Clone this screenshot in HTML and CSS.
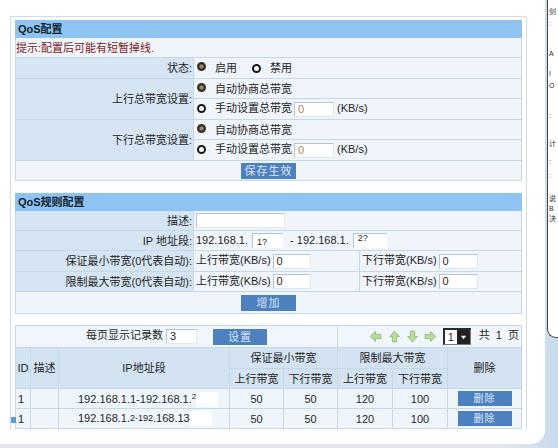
FILE: index.html
```html
<!DOCTYPE html>
<html lang="zh-CN">
<head>
<meta charset="utf-8">
<title>QoS配置</title>
<link rel="stylesheet" href="styles.css">
</head>
<body>
<div class="screen">
  <div class="main">
    <div class="frame">
      <table class="form s1">
        <colgroup><col class="c-lab"><col></colgroup>
        <tr class="h17"><td class="head" colspan="2">QoS配置</td></tr>
        <tr class="h20"><td class="tip" colspan="2">提示:配置后可能有短暂掉线.</td></tr>
        <tr class="h21"><td class="lab">状态:</td><td class="val"><span class="radio on"></span><span class="rt">启用</span><span class="radio off sp"></span><span class="rt">禁用</span></td></tr>
        <tr class="h20"><td class="lab" rowspan="2">上行总带宽设置:</td><td class="val"><span class="radio on"></span><span class="rt">自动协商总带宽</span></td></tr>
        <tr class="h21"><td class="val"><span class="radio off"></span><span class="rt">手动设置总带宽</span><span class="box b40 tan">0</span><span class="unit">(KB/s)</span></td></tr>
        <tr class="h20"><td class="lab" rowspan="2">下行总带宽设置:</td><td class="val"><span class="radio on"></span><span class="rt">自动协商总带宽</span></td></tr>
        <tr class="h21"><td class="val"><span class="radio off"></span><span class="rt">手动设置总带宽</span><span class="box b40 tan">0</span><span class="unit">(KB/s)</span></td></tr>
        <tr class="h20"><td class="btnrow" colspan="2"><span class="btn">保存生效</span></td></tr>
      </table>

      <table class="form s2">
        <colgroup><col class="c-lab"><col class="c-mid"><col></colgroup>
        <tr class="h17"><td class="head" colspan="3">QoS规则配置</td></tr>
        <tr class="h20"><td class="lab">描述:</td><td class="val" colspan="2"><span class="box b89"></span></td></tr>
        <tr class="h20"><td class="lab">IP 地址段:</td><td class="val" colspan="2">192.168.1.<span class="box b31 ipa"><span class="tiny lo">1?</span></span> - 192.168.1.<span class="box b34 ipb"><span class="tiny hi">2?</span></span></td></tr>
        <tr class="h21"><td class="lab">保证最小带宽(0代表自动):</td><td class="val">上行带宽(KB/s)<span class="box b38">0</span></td><td class="val">下行带宽(KB/s)<span class="box b39">0</span></td></tr>
        <tr class="h20"><td class="lab">限制最大带宽(0代表自动):</td><td class="val">上行带宽(KB/s)<span class="box b38">0</span></td><td class="val">下行带宽(KB/s)<span class="box b39">0</span></td></tr>
        <tr class="h22"><td class="btnrow" colspan="3"><span class="btn">增加</span></td></tr>
      </table>

      <table class="list">
        <colgroup>
          <col class="w15"><col class="w28"><col class="w171"><col class="w54"><col class="w54"><col class="w55"><col class="w55"><col>
        </colgroup>
        <tr class="h22 pagerow">
          <td colspan="5" class="per">每页显示记录数<span class="box b31 pg">3</span><span class="btn small">设置</span></td>
          <td colspan="3" class="pager">
            <svg class="ico" viewBox="0 0 12 12" width="13" height="13"><path d="M1 6 L6 1.5 V4 H11 V8 H6 V10.5 Z" fill="#b9dc9c" stroke="#8fbe6e" stroke-width="0.8"/></svg>
            <svg class="ico" viewBox="0 0 12 12" width="13" height="13"><path d="M6 1 L10.5 6 H8 V11 H4 V6 H1.5 Z" fill="#b9dc9c" stroke="#8fbe6e" stroke-width="0.8"/></svg>
            <svg class="ico" viewBox="0 0 12 12" width="13" height="13"><path d="M6 11 L10.5 6 H8 V1 H4 V6 H1.5 Z" fill="#b9dc9c" stroke="#8fbe6e" stroke-width="0.8"/></svg>
            <svg class="ico" viewBox="0 0 12 12" width="13" height="13"><path d="M11 6 L6 1.5 V4 H1 V8 H6 V10.5 Z" fill="#b9dc9c" stroke="#8fbe6e" stroke-width="0.8"/></svg>
            <span class="sel"><span class="selv">1</span><span class="seld"><svg viewBox="0 0 10 10" width="9" height="9"><path d="M2 3 H8 L5 7 Z" fill="#fff"/></svg></span></span>
            <span class="pgtxt">共 1 页</span>
          </td>
        </tr>
        <tr class="h21 th">
          <td rowspan="2">ID</td><td rowspan="2">描述</td><td rowspan="2">IP地址段</td>
          <td colspan="2">保证最小带宽</td><td colspan="2">限制最大带宽</td><td rowspan="2">删除</td>
        </tr>
        <tr class="h20 th">
          <td>上行带宽</td><td>下行带宽</td><td>上行带宽</td><td>下行带宽</td>
        </tr>
        <tr class="h20 tr">
          <td class="id">1</td><td></td><td class="ip">192.168.1.1-192.168.1.<span class="sup">2</span><span class="mask"></span></td>
          <td>50</td><td>50</td><td>120</td><td>100</td><td><span class="btn del">删除</span></td>
        </tr>
        <tr class="h20 tr">
          <td class="id"><span class="mark"></span>1</td><td></td><td class="ip">192.168.1.<span class="sm">2-192</span>.168.13<span class="mask"></span></td>
          <td>50</td><td>50</td><td>120</td><td>100</td><td><span class="btn del">删除</span></td>
        </tr>
      </table>
    </div>
  </div>
  <div class="side">
    <p class="f1">剑</p>
    <p class="f2">:</p>
    <p class="f3">A</p>
    <p class="f4">I</p>
    <p class="f5">O</p>
    <p class="f6">:</p>
    <p class="f7">计</p>
    <p class="f8">:</p>
    <p class="f9">:</p>
    <p class="f10">说</p>
    <p class="f11">B</p>
    <p class="f12">决</p>
  </div>
</div>
</body>
</html>
```
FILE: styles.css
```css
html, body {
  margin: 0;
  padding: 0;
}
body {
  width: 558px;
  height: 448px;
  overflow: hidden;
  background: linear-gradient(to right, #e3e7eb 0%, #e3e7eb 90%, #c8dbee 100%);
  font-family: "Liberation Sans", "Noto Sans CJK SC", sans-serif;
  font-size: 11px;
  color: #1f1f1f;
}
.screen {
  display: flex;
  align-items: flex-start;
  height: 448px;
}
.main {
  width: 545px;
  height: 444px;
  background: #fff;
  border-bottom-right-radius: 14px;
  padding: 16px 0 0 10px;
  box-sizing: border-box;
  flex: none;
}
.frame {
  width: 517px;
  height: 414px;
  border: 1px solid #cfdce8;
  border-bottom: none;
  box-sizing: border-box;
  padding: 3px 0 0 4px;
}
table {
  border-collapse: collapse;
  table-layout: fixed;
  width: 507px;
}
td {
  padding: 0;
  border: 1px solid #c6d7e7;
  white-space: nowrap;
  overflow: hidden;
  line-height: 14px;
}
tr.h17 td { height: 16px; }
tr.h20 td { height: 19px; }
tr.h21 td { height: 20px; }
tr.h22 td { height: 21px; }

.c-lab { width: 178px; }
.c-mid { width: 166px; }
.w15 { width: 15px; }
.w28 { width: 28px; }
.w171 { width: 171px; }
.w54 { width: 54px; }
.w55 { width: 55px; }

.head {
  background: #8fc4f2;
  font-weight: bold;
  color: #0f1e30;
  padding-left: 2px;
  border-color: #8fc4f2;
}
.tip {
  background: #eff5fb;
  color: #7d1818;
  padding-left: 0;
}
.lab {
  background: #d6e5f3;
  text-align: right;
  padding-right: 1px;
}
.val {
  background: #eff5fb;
  padding-left: 2px;
}
.btnrow {
  background: #eff5fb;
  text-align: center;
}
.s1 { margin-bottom: 12px; }
.s2 { margin-bottom: 11px; }

.radio {
  display: inline-block;
  box-sizing: border-box;
  width: 9px;
  height: 9px;
  border-radius: 50%;
  vertical-align: -1px;
  margin-left: 1px;
}
.radio.on {
  border: 2px solid #303028;
  background: radial-gradient(circle, #9a8d5c 0 1.4px, #5d5438 2.4px);
  vertical-align: 1px;
}
.radio.off {
  border: 2.5px solid #151515;
  background: #fff;
}
.radio.sp { margin-left: 15px; }
.rt { margin-left: 9px; }

.box {
  display: inline-block;
  box-sizing: border-box;
  height: 15px;
  border: 1px solid #b3c5d7;
  border-right-color: #dfe7ef;
  border-bottom-color: #dfe7ef;
  background: #fff;
  vertical-align: middle;
  padding-left: 3px;
  line-height: 13px;
  text-align: left;
}
.b40 { width: 40px; margin-left: 2px; }
.b89 { width: 89px; }
.b31 { width: 31px; }
.b34 { width: 34px; }
.b38 { width: 38px; margin-left: 2px; }
.b39 { width: 39px; margin-left: 2px; }
.tan { color: #a98b4f; }
.unit { margin-left: 3px; }
.ipa { margin-left: 4px; margin-right: 4px; border-right: none; border-bottom: none; position: relative; }
.ipb { margin-left: 4px; border-right: none; border-bottom: none; position: relative; }
.tiny { font-size: 9px; position: absolute; left: 4px; }
.tiny.lo { top: 2px; }
.tiny.hi { top: -2px; }

.btn {
  display: inline-block;
  width: 55px;
  height: 16px;
  line-height: 16px;
  background: #4d80bf;
  color: #dce8f8;
  text-align: center;
  vertical-align: middle;
  letter-spacing: 1px;
}
.btn.small { width: 54px; margin-left: 16px; }
.btn.del { width: 54px; height: 15px; line-height: 15px; font-size: 10px; }

.list td { text-align: center; }
.pagerow td { background: #f0f6fb; }
.per { padding: 0; }
.pg { margin-left: 3px; }
.pager { text-align: right !important; padding-right: 2px !important; }
.ico { vertical-align: middle; margin-left: 2px; }
.sel {
  display: inline-flex;
  vertical-align: middle;
  height: 14px;
  border: 1px solid #7a7a7a;
  border-left: 2px solid #2a2a2a;
  border-top: 2px solid #2a2a2a;
  background: #fff;
  margin-left: 3px;
}
.selv { width: 12px; text-align: center; line-height: 14px; }
.seld {
  width: 13px;
  background: #222;
  display: flex;
  align-items: center;
  justify-content: center;
}
.pgtxt { margin-left: 5px; word-spacing: 3px; }
.th td { background: #d4e3f2; }
.tr td { background: #eef5fb; }
.id { text-align: left !important; padding-left: 2px !important; position: relative; overflow: visible !important; }
.ip { text-align: left !important; padding-left: 19px !important; }
.sup { font-size: 8px; vertical-align: 4px; }
.sm { font-size: 9px; vertical-align: 1px; }
.mask {
  display: inline-block;
  width: 22px;
  height: 15px;
  background: #fff;
  vertical-align: middle;
}
.mark {
  position: absolute;
  left: -5px;
  top: 8px;
  width: 5px;
  height: 6px;
  background: #5a9ad6;
}

.side {
  width: 11px;
  height: 338px;
  margin-left: 2px;
  box-sizing: border-box;
  border-left: 1.5px solid #444;
  border-bottom: 1.5px solid #444;
  border-bottom-left-radius: 9px;
  background: #fff;
  overflow: hidden;
  position: relative;
  flex: none;
}
.side p {
  margin: 0;
  position: absolute;
  left: 1px;
  font-size: 7px;
  line-height: 8px;
  color: #2a2a2a;
}
.f1 { top: 8px; }
.f2 { top: 20px; }
.f3 { top: 50px; }
.f4 { top: 70px; }
.f5 { top: 82px; }
.f6 { top: 112px; }
.f7 { top: 140px; }
.f8 { top: 158px; }
.f9 { top: 172px; }
.f10 { top: 195px; }
.f11 { top: 205px; }
.f12 { top: 215px; }
```
